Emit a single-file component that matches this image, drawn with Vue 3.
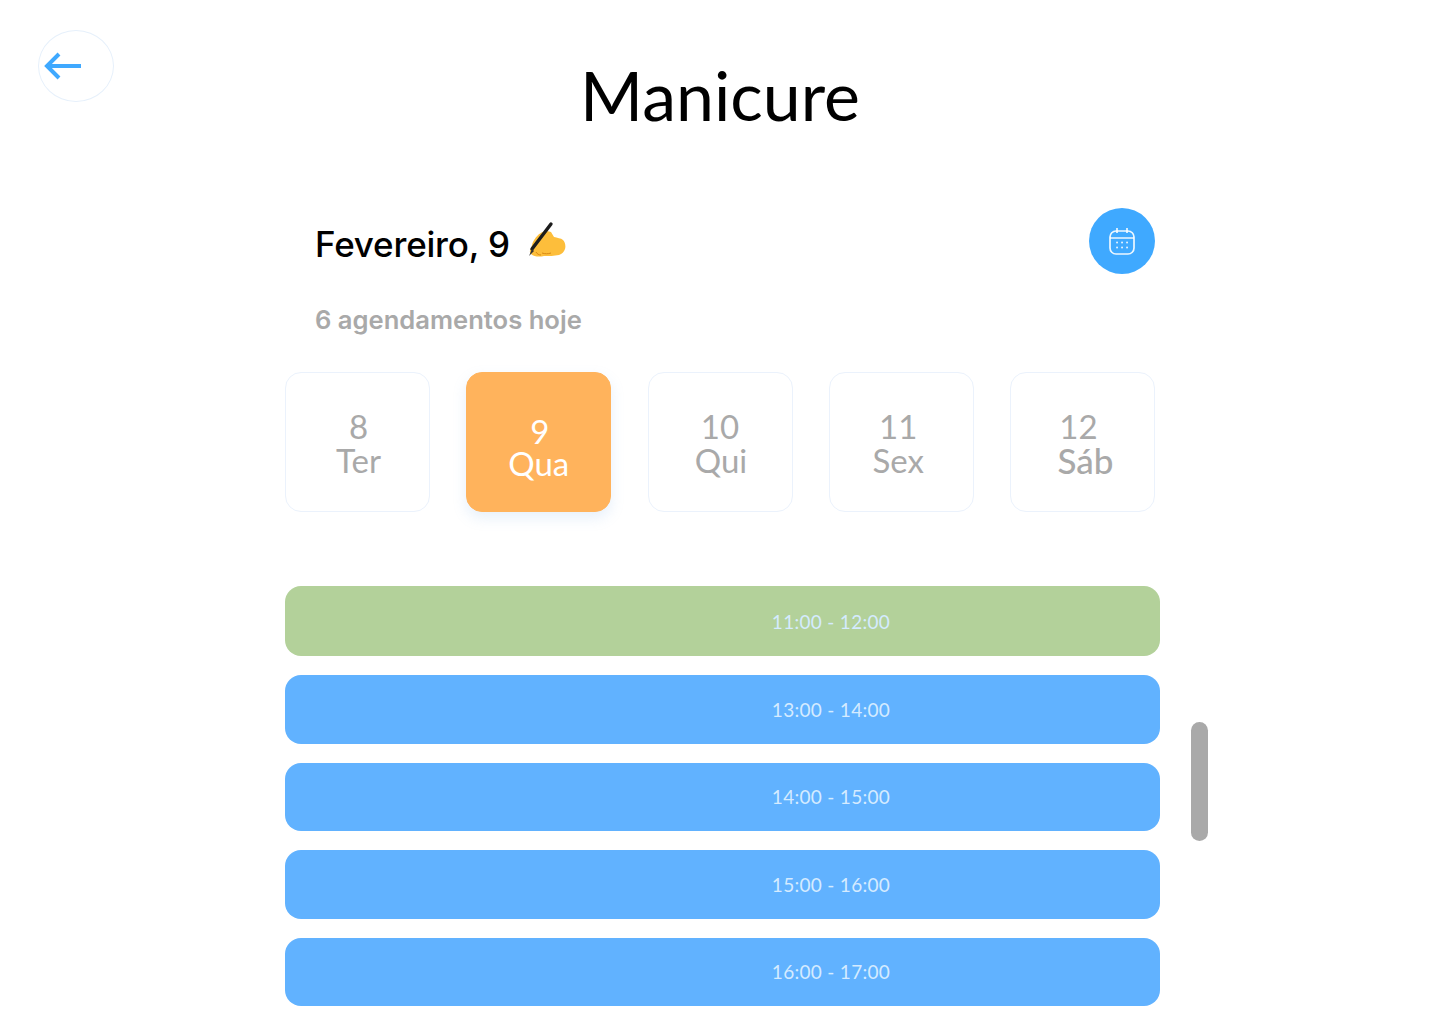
<template>
  <div class="page">
    <header class="top">
      <button class="back">
        <svg width="38" height="28" viewBox="0 0 38 28" fill="none" stroke="#3FA9FF" stroke-width="4">
          <path d="M37 14H3" />
          <path d="M15 2L3 14l12 12" />
        </svg>
      </button>
      <h1>Manicure</h1>
    </header>

    <main class="content">
      <div class="month-row">
        <div>
          <div class="month">
            <span>Fevereiro, 9</span>
            <svg class="hand" width="50" height="42" viewBox="0 0 50 42">
              <path d="M11 24c2-4 6-9 10-10 3-1 6-1 8 0l3 5c3 1 7 1 9 3 2 2 3 6 2 9-1 3-3 5-6 6-5 1-10 1-15 1-4 1-10 1-13-2-2-2-1-4 0-6 1-2 1-4 2-6z" fill="#FDBE3B" />
              <path d="M20 35c3 1 6 1 9 0M14 34c1 2 3 3 5 3" stroke="#D98A14" stroke-width="1" fill="none" />
              <path d="M29 6L10 31" stroke="#1c1c1c" stroke-width="3.4" stroke-linecap="round" />
              <path d="M10 31l-3 7 5-5z" fill="#333" />
            </svg>
          </div>
          <p class="count">6 agendamentos hoje</p>
        </div>
        <button class="cal">
          <svg width="26" height="28" viewBox="0 0 26 28" fill="none" stroke="#fff" stroke-opacity=".9" stroke-width="1.7">
            <rect x="1" y="4" width="24" height="23" rx="6" />
            <path d="M1 11h24M8 1v5M18 1v5" />
            <path d="M8 15.5h.1M13 15.5h.1M18 15.5h.1M8 20.5h.1M13 20.5h.1M18 20.5h.1" stroke-linecap="round" stroke-width="1.8" />
          </svg>
        </button>
      </div>

      <div class="days">
        <div v-for="d in days" :key="d.num" class="day" :class="{ active: d.active, wide: d.wide }">
          <span class="num" :style="{ marginLeft: d.numX + 'px' }">{{ d.num }}</span>
          <span class="name" :style="{ marginLeft: d.nameX + 'px' }">{{ d.name }}</span>
        </div>
      </div>

      <div class="slots">
        <div v-for="s in slots" :key="s.time" class="slot" :class="{ done: s.done }">{{ s.time }}</div>
        <div class="scroll-thumb"></div>
      </div>
    </main>
  </div>
</template>

<script setup>
const days = [
  { num: '8', name: 'Ter', numX: 2, nameX: 2 },
  { num: '9', name: 'Qua', active: true, numX: 2, nameX: 0 },
  { num: '10', name: 'Qui', numX: 0, nameX: 2 },
  { num: '11', name: 'Sex', numX: -6, nameX: -6 },
  { num: '12', name: 'Sáb', wide: true, numX: -8, nameX: 6 }
]

const slots = [
  { time: '11:00 - 12:00', done: true },
  { time: '13:00 - 14:00' },
  { time: '14:00 - 15:00' },
  { time: '15:00 - 16:00' },
  { time: '16:00 - 17:00' }
]
</script>

<style>
html,
body {
  background: #fff;
  overflow: hidden;
}
</style>

<style scoped>
.page {
  height: 1024px;
  font-family: Lato, "Liberation Sans", sans-serif;
  color: #000;
}
.top {
  position: relative;
  display: flex;
  justify-content: center;
  padding-top: 54px;
}
.back {
  position: absolute;
  left: 38px;
  top: 30px;
  width: 76px;
  height: 72px;
  padding: 0 0 0 5px;
  display: flex;
  align-items: center;
  border: 1px solid #e6f0fb;
  border-radius: 50%;
  background: #fff;
}
h1 {
  margin: 0;
  font-size: 68px;
  line-height: 82px;
  font-weight: 400;
}
.content {
  width: 875px;
  margin: 72px 0 0 285px;
}
.month-row {
  display: flex;
  justify-content: space-between;
  align-items: flex-start;
  padding: 0 5px 0 30px;
}
.month {
  display: flex;
  align-items: center;
  gap: 12px;
  height: 72px;
  font-family: Inter, sans-serif;
  font-size: 35px;
  font-weight: 500;
  letter-spacing: -0.2px;
}
.hand {
  margin-top: -10px;
}
.count {
  margin: 25px 0 0;
  font-family: Inter, sans-serif;
  font-size: 25.6px;
  line-height: 30px;
  font-weight: 600;
  color: #a9a9a9;
}
.cal {
  width: 66px;
  height: 66px;
  padding: 0;
  display: flex;
  align-items: center;
  justify-content: center;
  border: none;
  border-radius: 50%;
  background: #3fa9ff;
}
.days {
  display: flex;
  justify-content: space-between;
  width: 870px;
  margin-top: 37px;
}
.day {
  width: 145px;
  height: 140px;
  box-sizing: border-box;
  padding-top: 2px;
  display: flex;
  flex-direction: column;
  align-items: center;
  justify-content: center;
  border: 1px solid #ebf2fc;
  border-radius: 16px;
  background: #fff;
  font-size: 33px;
  line-height: 34px;
  color: #a9a9a9;
}
.day.active {
  padding-top: 9px;
  line-height: 32px;
  border-color: #ffb35c;
  background: #ffb35c;
  color: #fff;
  box-shadow: 0 6px 14px rgba(120, 170, 230, 0.18);
}
.day.wide .name {
  font-size: 35px;
  font-weight: 500;
}
.num,
.name {
  display: block;
}
.slots {
  position: relative;
  display: flex;
  flex-direction: column;
  gap: 19px;
  margin-top: 74px;
}
.slot {
  height: 68.5px;
  display: flex;
  align-items: center;
  justify-content: center;
  padding-left: 217px;
  border-radius: 16px;
  background: #61b2ff;
  font-size: 19px;
  letter-spacing: 0.3px;
  color: #d5ebff;
}
.slot.done {
  height: 70px;
  background: #b3d19a;
}
.scroll-thumb {
  position: absolute;
  left: 906px;
  top: 136px;
  width: 17px;
  height: 119px;
  border-radius: 9px;
  background: #a9a9a9;
}
</style>
